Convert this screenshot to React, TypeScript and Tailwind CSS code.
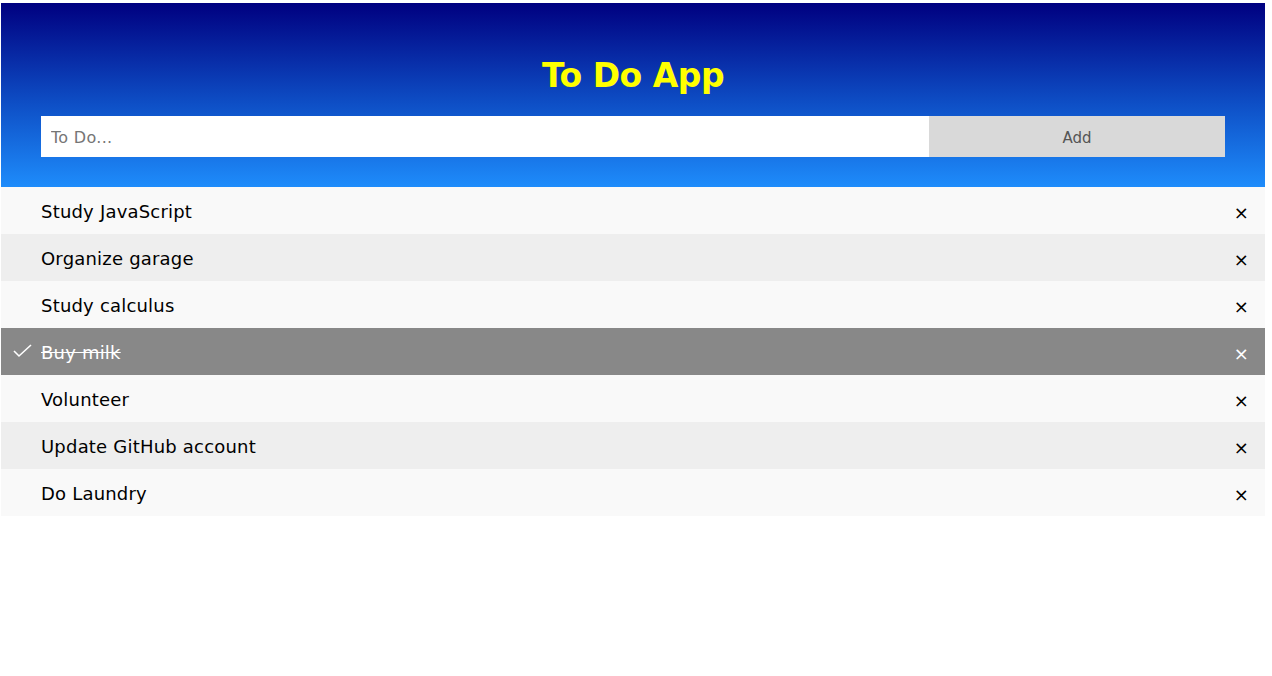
import React, { useState } from "react";

type Todo = { text: string; done: boolean };

const initial: Todo[] = [
  { text: "Study JavaScript", done: false },
  { text: "Organize garage", done: false },
  { text: "Study calculus", done: false },
  { text: "Buy milk", done: true },
  { text: "Volunteer", done: false },
  { text: "Update GitHub account", done: false },
  { text: "Do Laundry", done: false },
];

export default function App() {
  const [todos, setTodos] = useState<Todo[]>(initial);
  const [value, setValue] = useState("");

  const add = () => {
    if (!value.trim()) return;
    setTodos([...todos, { text: value, done: false }]);
    setValue("");
  };

  return (
    <div className="min-h-screen bg-white font-['DejaVu_Sans',Verdana,sans-serif]">
      <div className="ml-[1px] pt-[3px] w-[1264px]">
        {/* header with title and input */}
        <div className="h-[184px] bg-[linear-gradient(180deg,#000080_0%,#0e4fc6_55%,#1e8cfb_100%)] px-[40px] flex flex-col">
          <h2 className="mt-[55px] h-[36px] leading-[36px] text-center text-[33px] font-bold text-[#ffff00] tracking-[-0.5px]">
            To Do App
          </h2>
          <div className="mt-[22px] flex h-[41px]">
            <input
              value={value}
              onChange={(e) => setValue(e.target.value)}
              placeholder="To Do..."
              className="flex-1 h-full bg-white px-[10px] pt-[2px] text-[16px] tracking-[0.3px] text-black outline-none placeholder:text-[#757575]"
            />
            <button
              onClick={add}
              className="w-[296px] h-full bg-[#d9d9d9] pt-[3px] text-[15px] text-[#555] cursor-pointer"
            >
              Add
            </button>
          </div>
        </div>

        {/* list */}
        <ul>
          {todos.map((t, i) => (
            <li
              key={i}
              onClick={() =>
                setTodos(todos.map((x, j) => (j === i ? { ...x, done: !x.done } : x)))
              }
              className={
                "relative h-[47px] flex items-center pl-[40px] pr-[50px] pt-[2px] text-[18px] tracking-[0.2px] cursor-pointer " +
                (t.done
                  ? "bg-[#888] text-white line-through"
                  : i % 2 === 0
                  ? "bg-[#f9f9f9] text-black"
                  : "bg-[#eee] text-black")
              }
            >
              {t.done && (
                <svg
                  className="absolute left-[12px] top-[16px]"
                  width="20"
                  height="14"
                  viewBox="0 0 20 14"
                >
                  <path d="M1 7 L6 12 L18 1" stroke="white" strokeWidth="1.6" fill="none" />
                </svg>
              )}
              {t.text}
              <span
                onClick={(e) => {
                  e.stopPropagation();
                  setTodos(todos.filter((_, j) => j !== i));
                }}
                className={
                  "absolute right-[16px] top-0 pt-[3px] h-full flex items-center text-[18px] no-underline " +
                  (t.done ? "text-white" : "text-black")
                }
              >
                ×
              </span>
            </li>
          ))}
        </ul>
      </div>
    </div>
  );
}
